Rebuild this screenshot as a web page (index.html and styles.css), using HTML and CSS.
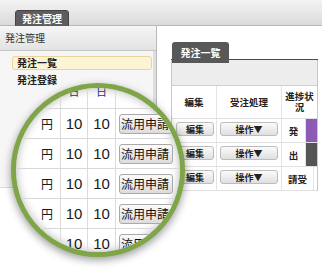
FILE: index.html
```html
<!DOCTYPE html>
<html lang="ja">
<head>
<meta charset="utf-8">
<link rel="stylesheet" href="styles.css">
</head>
<body>
<div class="app">
  <header class="topbar"><span class="top-btn">発注管理</span></header>
  <div class="main">
    <aside class="side">
      <div class="side-head">発注管理</div>
      <ul class="menu">
        <li class="menu-item active">発注一覧</li>
        <li class="menu-item">発注登録</li>
      </ul>
    </aside>
    <section class="content">
      <div class="tabs"><span class="tab">発注一覧</span></div>
      <div class="panel">
        <div class="toolbar"></div>
        <div class="row head">
          <div class="c c-edit">編集</div>
          <div class="c c-op">受注処理</div>
          <div class="c c-stat-head">進捗状況</div>
        </div>
        <div class="row">
          <div class="c c-edit"><span class="btn btn-edit">編集</span></div>
          <div class="c c-op"><span class="btn btn-op">操作▼</span></div>
          <div class="c c-stat">発</div>
          <div class="c c-bar bar-purple"></div>
        </div>
        <div class="row">
          <div class="c c-edit"><span class="btn btn-edit">編集</span></div>
          <div class="c c-op"><span class="btn btn-op">操作▼</span></div>
          <div class="c c-stat">出</div>
          <div class="c c-bar bar-dark"></div>
        </div>
        <div class="row">
          <div class="c c-edit"><span class="btn btn-edit">編集</span></div>
          <div class="c c-op"><span class="btn btn-op">操作▼</span></div>
          <div class="c c-stat-wide">請受</div>
          <div class="c c-blank"></div>
        </div>
      </div>
    </section>
  </div>
  <div class="lens">
    <div class="lgrid">
      <div class="lrow lhead">
        <div class="lc l-yen"></div>
        <div class="lc l-num">日</div>
        <div class="lc l-num">日</div>
        <div class="lc l-act"></div>
      </div>
      <div class="lrow">
        <div class="lc l-yen">円</div>
        <div class="lc l-num">10</div>
        <div class="lc l-num">10</div>
        <div class="lc l-act"><span class="lbtn">流用申請</span></div>
      </div>
      <div class="lrow">
        <div class="lc l-yen">円</div>
        <div class="lc l-num">10</div>
        <div class="lc l-num">10</div>
        <div class="lc l-act"><span class="lbtn">流用申請</span></div>
      </div>
      <div class="lrow">
        <div class="lc l-yen">円</div>
        <div class="lc l-num">10</div>
        <div class="lc l-num">10</div>
        <div class="lc l-act"><span class="lbtn">流用申請</span></div>
      </div>
      <div class="lrow">
        <div class="lc l-yen">円</div>
        <div class="lc l-num">10</div>
        <div class="lc l-num">10</div>
        <div class="lc l-act"><span class="lbtn">流用申請</span></div>
      </div>
      <div class="lrow">
        <div class="lc l-yen">円</div>
        <div class="lc l-num">10</div>
        <div class="lc l-num">10</div>
        <div class="lc l-act"><span class="lbtn">流用申請</span></div>
      </div>
    </div>
  </div>
</div>
</body>
</html>
```

FILE: styles.css
```css
* { box-sizing: border-box; margin: 0; padding: 0; }
html, body { background: #fff; }
body {
  margin: 0;
  width: 322px;
  height: 271px;
  overflow: hidden;
  font-family: "Noto Sans CJK JP", "Noto Sans", sans-serif;
  color: #222;
}
.app { position: relative; width: 322px; height: 271px; }

.topbar {
  height: 26px;
  padding: 4px 0 0 15px;
  background: linear-gradient(#f4f4f4, #dadada);
  border-bottom: 1px solid #b8b8b8;
}
.top-btn {
  display: inline-flex;
  align-items: center;
  justify-content: center;
  width: 54px;
  height: 18px;
  background: #5d5d5d;
  border: 1px solid #454545;
  border-radius: 3px;
  color: #fff;
  font-size: 10px;
  font-weight: bold;
  line-height: 1;
}

.main { display: flex; align-items: flex-start; }

.side {
  width: 157px;
  height: 162px;
  background: #f6f6f6;
  border-right: 1px solid #b9b9b9;
  border-bottom: 1px solid #dcdcdc;
  box-shadow: inset -3px 0 0 #dedede;
}
.side-head {
  height: 25px;
  padding-left: 5px;
  font-size: 10px;
  line-height: 24px;
  color: #333;
  background: linear-gradient(#f5f5f5, #e3e3e3);
  border-bottom: 1px solid #c6c6c6;
}
.menu { list-style: none; padding: 5px 0 0 12px; }
.menu-item {
  width: 140px;
  height: 14px;
  margin-bottom: 3px;
  padding-left: 4px;
  border: 1px solid transparent;
  border-radius: 3px;
  font-size: 10px;
  font-weight: bold;
  line-height: 12px;
  color: #222;
}
.menu-item.active { background: #fdf4d5; border-color: #e6d59c; }

.content { width: 147px; margin-left: 14px; padding-top: 12px; }
.tabs { height: 22px; padding-left: 1px; border-bottom: 1px solid #4a4a4a; }
.tab {
  display: inline-block;
  width: 57px;
  height: 21px;
  background: #585858;
  border-radius: 3px 3px 0 0;
  color: #fff;
  font-size: 10px;
  font-weight: bold;
  line-height: 21px;
  text-align: center;
}
.panel { border-left: 1px solid #c8c8c8; border-right: 1px solid #c8c8c8; }
.toolbar { height: 26px; background: #ededed; border-bottom: 1px solid #d0d0d0; }

.row { display: flex; height: 24px; border-bottom: 1px solid #e0e0e0; }
.row.head { height: 33px; }
.c {
  display: flex;
  align-items: center;
  justify-content: center;
  border-right: 1px solid #e4e4e4;
  font-size: 9.5px;
  font-weight: bold;
  color: #222;
}
.row .c { align-items: flex-start; padding-top: 3px; }
.row.head .c { align-items: center; padding-top: 0; }
.c-edit { width: 45px; justify-content: flex-start; padding-left: 4px; }
.row.head .c-edit { justify-content: center; padding-left: 0; }
.c-op { width: 65px; }
.c-stat { width: 24px; padding-top: 5px !important; }
.c-stat-head { width: 35px; border-right: none; line-height: 11px; text-align: center; padding: 0 2px; }
.c-stat-wide { width: 32px; padding-top: 5px !important; }
.c-bar { width: 11px; border-right: none; }
.c-blank { width: 3px; border-right: none; }
.bar-purple { background: #8d5bb4; }
.bar-dark { background: #555; }

.btn {
  display: inline-flex;
  align-items: center;
  justify-content: center;
  height: 14px;
  background: linear-gradient(#fbfbfb, #dfdfdf);
  border: 1px solid #bcbcbc;
  border-radius: 3px;
  font-size: 9px;
  font-weight: bold;
  color: #222;
  line-height: 1;
}
.btn-edit { width: 38px; }
.btn-op { width: 58px; }

.lens {
  position: absolute;
  left: 11px;
  top: 83px;
  width: 174px;
  height: 174px;
  border-radius: 50%;
  border: 5px solid #7ea548;
  overflow: hidden;
  background: #fff;
  box-shadow: 0 3px 9px rgba(0, 0, 0, 0.4), inset 0 0 10px rgba(0, 0, 0, 0.3);
}
.lgrid { margin: -9px 0 0 -30px; width: 240px; }
.lrow { display: flex; height: 30px; border-bottom: 1px solid #d8d8d8; }
.lc {
  display: flex;
  align-items: center;
  border-right: 1px solid #dcdcdc;
  color: #1a1a1a;
}
.l-yen {
  width: 75px;
  justify-content: flex-end;
  padding-right: 7px;
  font-size: 12px;
}
.l-num {
  width: 28px;
  justify-content: center;
  font-family: "Liberation Sans", Arial, sans-serif;
  font-size: 15px;
}
.lrow .l-num:nth-child(2) { width: 27px; }
.lhead .l-num {
  font-family: "Noto Sans CJK JP", sans-serif;
  font-size: 11px;
  color: #24367a;
  padding-bottom: 5px;
}
.l-act { width: 110px; border-right: none; padding-left: 3px; }
.lbtn {
  display: inline-flex;
  align-items: center;
  justify-content: flex-start;
  width: 54px;
  height: 20px;
  padding-left: 1px;
  background: linear-gradient(#fbfbfb, #dcdcdc);
  border: 1px solid #a9a9a9;
  border-radius: 3px;
  font-size: 12px;
  color: #111;
  line-height: 1;
  white-space: nowrap;
}
```
